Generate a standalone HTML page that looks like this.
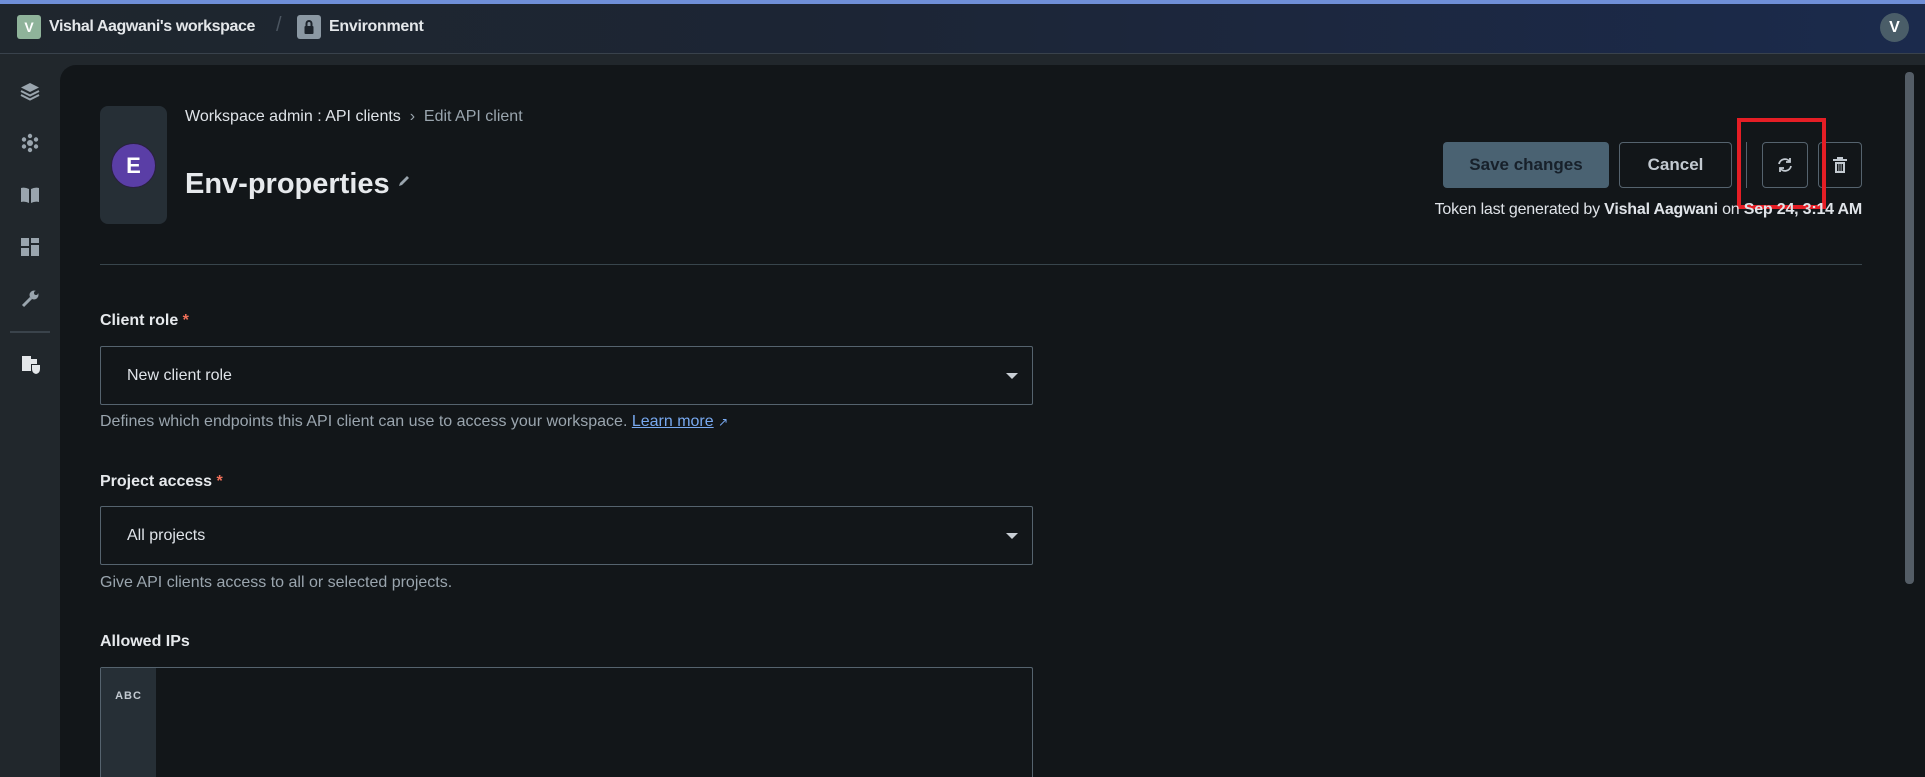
<!DOCTYPE html>
<html><head><meta charset="utf-8"><style>
*{box-sizing:border-box;margin:0;padding:0}
html{overflow:hidden;width:1925px;height:777px}
body{width:1925px;height:777px;overflow:hidden;background:#21272c;font-family:"Liberation Sans",sans-serif;color:#dfe3e8;position:relative}
.top{position:absolute;left:0;top:0;width:1925px;height:4px;background:#6f8fd8}
.hdr{position:absolute;left:0;top:4px;width:1925px;height:50px;background:linear-gradient(90deg,#1f262d 0%,#1c2535 45%,#1b2a4c 100%);border-bottom:1px solid #39424c}
.abs{position:absolute}
.side{position:absolute;left:0;top:55px;width:60px;height:722px;background:#21272c}
.panel{position:absolute;left:60px;top:65px;width:1865px;height:712px;background:#121619;border-radius:16px 0 0 0;overflow:hidden}
.btn{position:absolute;border-radius:4px;font-size:17px;font-weight:bold;display:flex;align-items:center;justify-content:center}
.lbl{position:absolute;left:100px;font-size:16px;font-weight:bold;color:#e6e9ec}
.lbl span{color:#f0705a}
.sel{position:absolute;left:100px;width:933px;height:59px;border:1px solid #55636e;border-radius:2px;font-size:16px;padding-left:26px;display:flex;align-items:center}
.sel:after{content:"";position:absolute;right:14px;top:26px;border-left:6px solid transparent;border-right:6px solid transparent;border-top:6px solid #c8ced4}
.help{position:absolute;left:100px;font-size:16px;color:#9aa5ae}
</style></head><body>
<div class="top"></div>
<div class="hdr"></div>
<div class="abs" style="left:17px;top:15px;width:24px;height:24px;background:#8fb39a;border-radius:3px;color:#fff;font-weight:bold;font-size:14px;text-align:center;line-height:24px">V</div>
<div class="abs" style="left:49px;top:18px;font-size:16px;letter-spacing:-0.4px;font-weight:bold;color:#e4e7ea">Vishal Aagwani's workspace</div>
<div class="abs" style="left:276px;top:14px;font-size:20px;color:#4b5560">/</div>
<div class="abs" style="left:297px;top:15px;width:24px;height:24px;background:#8b98a3;border-radius:3px"><svg width="24" height="24"><rect x="7.5" y="11" width="9" height="8" rx="1" fill="#1c232b"/><path d="M9.5 11V8.5a2.5 2.5 0 0 1 5 0V11" stroke="#1c232b" stroke-width="2" fill="none"/></svg></div>
<div class="abs" style="left:329px;top:18px;font-size:16px;letter-spacing:-0.3px;font-weight:bold;color:#e4e7ea">Environment</div>
<div class="abs" style="left:1880px;top:13px;width:29px;height:29px;border-radius:50%;background:#4a5d68;color:#fff;font-weight:bold;font-size:16px;text-align:center;line-height:29px">V</div>
<div class="side"></div>
<svg class="abs" style="left:18px;top:80px" width="24" height="300" fill="#9aa5ae">
<path d="M12 3l9 4.5-9 4.5-9-4.5z"/><path d="M3 11l9 4.5 9-4.5" stroke="#9aa5ae" stroke-width="2" fill="none"/><path d="M3 15l9 4.5 9-4.5" stroke="#9aa5ae" stroke-width="2" fill="none"/>
<g transform="translate(0,51)"><circle cx="12" cy="12" r="3"/><circle cx="12" cy="5" r="2.2"/><circle cx="12" cy="19" r="2.2"/><circle cx="6" cy="8.5" r="2.2"/><circle cx="18" cy="8.5" r="2.2"/><circle cx="6" cy="15.5" r="2.2"/><circle cx="18" cy="15.5" r="2.2"/></g>
<g transform="translate(0,103)"><path d="M3 5q4-1 8 1v14q-4-2-8-1z"/><path d="M21 5q-4-1-8 1v14q4-2 8-1z"/></g>
<g transform="translate(0,155)"><rect x="3" y="3" width="8" height="8"/><rect x="13" y="3" width="8" height="5"/><rect x="3" y="13" width="8" height="8"/><rect x="13" y="10" width="8" height="11"/></g>
<g transform="translate(0,207)"><path d="M5 19l8-8" stroke="#9aa5ae" stroke-width="3"/><circle cx="16" cy="8" r="4.5"/><circle cx="18" cy="6" r="2" fill="#21272c"/></g>
</svg>
<div class="abs" style="left:10px;top:331px;width:40px;height:2px;background:#3a434b"></div>
<svg class="abs" style="left:20px;top:353px" width="22" height="22" fill="#e4e7ea"><rect x="2" y="3" width="9" height="15"/><rect x="11" y="6" width="6" height="5"/><path d="M12 12h8v4q0 4-4 5q-4-1-4-5z"/></svg>
<div class="panel"></div>
<div class="abs" style="left:1905px;top:72px;width:9px;height:512px;background:#545d66;border-radius:4px"></div>
<div class="abs" style="left:100px;top:106px;width:67px;height:118px;background:#262f36;border-radius:8px"></div>
<div class="abs" style="left:111px;top:143px;width:45px;height:45px;border-radius:50%;background:#5a3ea6;border:1px solid #2a2040;color:#fff;font-size:22px;font-weight:bold;text-align:center;line-height:43px">E</div>
<div class="abs" style="left:185px;top:108px;font-size:16px;color:#dfe3e8">Workspace admin : API clients <span style="color:#9aa5ae">&nbsp;&#x203A;&nbsp; Edit API client</span></div>
<div class="abs" style="left:185px;top:168px;font-size:29px;font-weight:bold;color:#e6e9ec">Env-properties</div>
<svg class="abs" style="left:396px;top:173px" width="16" height="16"><path d="M3 13l1-3 7-7 2 2-7 7z" fill="#9aa5ae"/></svg>
<div class="btn" style="left:1443px;top:142px;width:166px;height:46px;background:#4a6272;color:#17202a">Save changes</div>
<div class="btn" style="left:1619px;top:142px;width:113px;height:46px;border:1px solid #55636e;color:#c3cad1">Cancel</div>
<div class="abs" style="left:1746px;top:142px;width:1px;height:46px;background:#55636e"></div>
<div class="btn" style="left:1762px;top:142px;width:46px;height:46px;border:1px solid #55636e"><svg width="18" height="18" fill="none" stroke="#c3cad1" stroke-width="1.8"><path d="M3 8a6 6 0 0 1 11-2"/><path d="M15 10a6 6 0 0 1-11 2"/><path d="M14 2v4h-4M4 16v-4h4"/></svg></div>
<div class="btn" style="left:1818px;top:142px;width:44px;height:46px;border:1px solid #55636e"><svg width="16" height="18" fill="#c3cad1"><rect x="1" y="3" width="14" height="2"/><rect x="5" y="1" width="6" height="2"/><path d="M3 6h10v11H3z M5 8v7h1.5V8z M7.3 8v7h1.4V8z M9.5 8v7H11V8z" fill-rule="evenodd"/></svg></div>
<div class="abs" style="left:1737px;top:118px;width:89px;height:91px;border:4px solid #e51e25"></div>
<div class="abs" style="right:63px;top:201px;font-size:16px;letter-spacing:-0.2px;color:#dfe3e8">Token last generated by <b>Vishal Aagwani</b> on <b>Sep 24, 3:14 AM</b></div>
<div class="abs" style="left:100px;top:264px;width:1762px;height:1px;background:#38454c"></div>
<div class="lbl" style="top:312px">Client role<span> *</span></div>
<div class="sel" style="top:346px">New client role</div>
<div class="help" style="top:413px">Defines which endpoints this API client can use to access your workspace. <span style="color:#78a9f0;text-decoration:underline">Learn more</span> <span style="color:#78a9f0;font-size:12px">&#x2197;</span></div>
<div class="lbl" style="top:473px">Project access<span> *</span></div>
<div class="sel" style="top:506px">All projects</div>
<div class="help" style="top:574px">Give API clients access to all or selected projects.</div>
<div class="lbl" style="top:633px">Allowed IPs</div>
<div class="abs" style="left:100px;top:667px;width:933px;height:110px;border:1px solid #55636e;border-bottom:none;border-radius:2px 2px 0 0"></div>
<div class="abs" style="left:101px;top:668px;width:55px;height:109px;background:#262f36;color:#c3cad1;font-size:11px;font-weight:bold;text-align:center;padding-top:22px;letter-spacing:1px">ABC</div>
</body></html>
